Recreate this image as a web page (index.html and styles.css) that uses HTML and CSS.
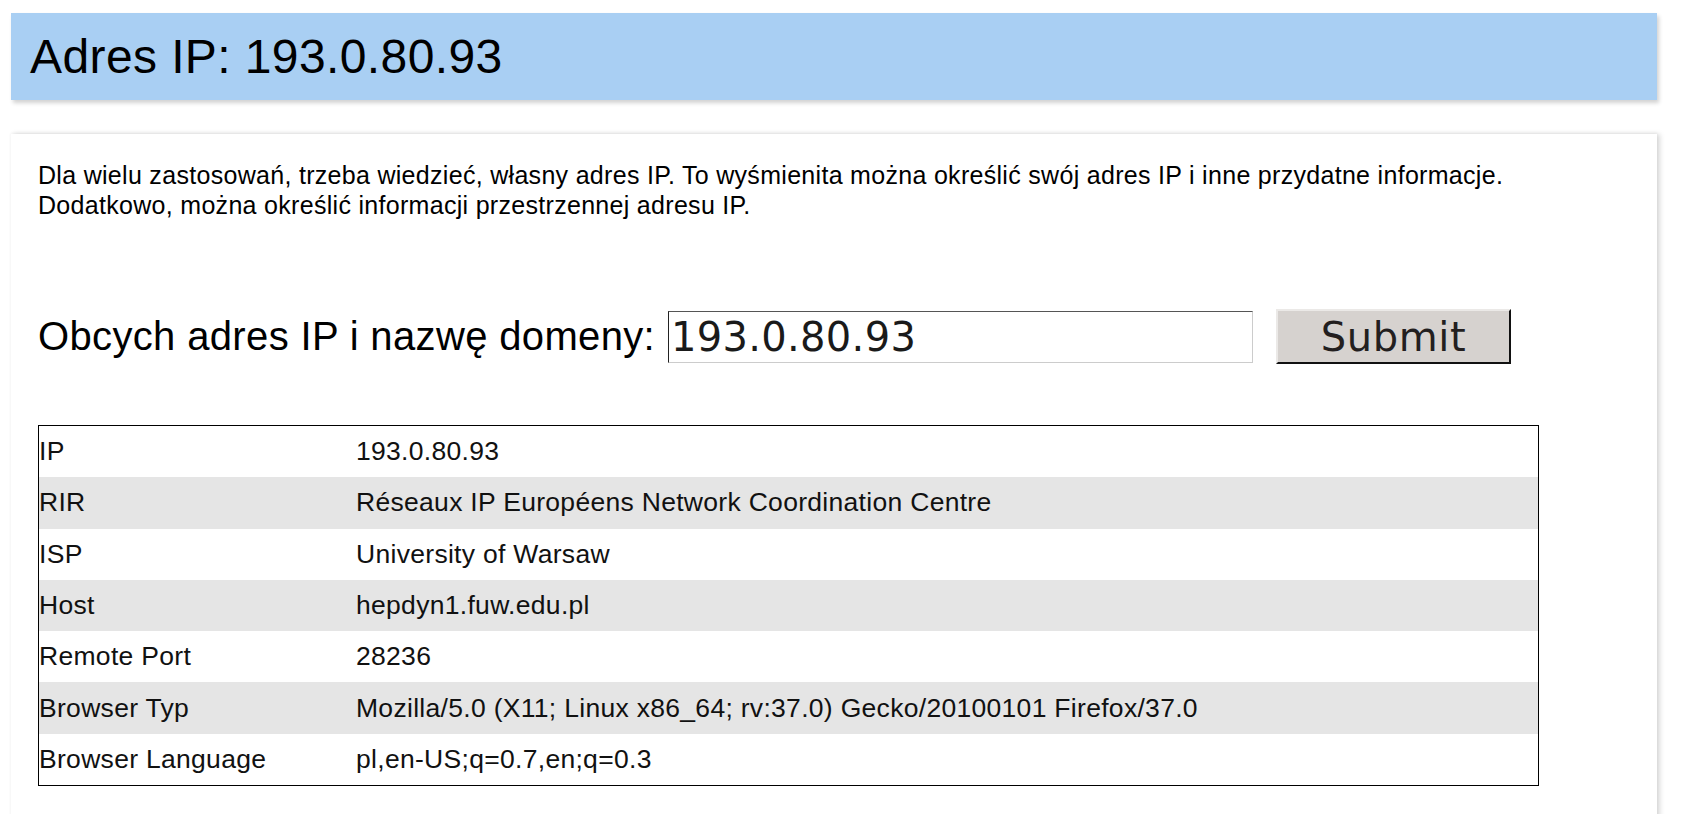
FILE: index.html
```html
<!DOCTYPE html>
<html lang="pl">
<head>
<meta charset="utf-8">
<title>Adres IP: 193.0.80.93</title>
<link rel="stylesheet" href="styles.css">
</head>
<body>
<header class="topbar">
  <h1 class="title">Adres IP: 193.0.80.93</h1>
</header>
<main class="card">
  <p class="intro">Dla wielu zastosowań, trzeba wiedzieć, własny adres IP. To wyśmienita można określić swój adres IP i inne przydatne informacje.<br>Dodatkowo, można określić informacji przestrzennej adresu IP.</p>
  <form class="lookup">
    <label class="lookup-label" for="ip">Obcych adres IP i nazwę domeny:</label>
    <input class="lookup-input" id="ip" type="text" value="193.0.80.93">
    <button class="lookup-btn" type="button">Submit</button>
  </form>
  <table class="info">
    <tr><td class="key">IP</td><td class="val">193.0.80.93</td></tr>
    <tr><td class="key">RIR</td><td class="val">Réseaux IP Européens Network Coordination Centre</td></tr>
    <tr><td class="key">ISP</td><td class="val">University of Warsaw</td></tr>
    <tr><td class="key">Host</td><td class="val">hepdyn1.fuw.edu.pl</td></tr>
    <tr><td class="key">Remote Port</td><td class="val">28236</td></tr>
    <tr><td class="key">Browser Typ</td><td class="val">Mozilla/5.0 (X11; Linux x86_64; rv:37.0) Gecko/20100101 Firefox/37.0</td></tr>
    <tr><td class="key">Browser Language</td><td class="val">pl,en-US;q=0.7,en;q=0.3</td></tr>
  </table>
</main>
</body>
</html>
```
FILE: styles.css
```css
html, body {
  margin: 0;
  padding: 0;
  background: #ffffff;
}
body {
  padding: 13px 33px 0 11px;
  font-family: "Liberation Sans", Arial, sans-serif;
  color: #000;
}
.topbar {
  background: #a9cff3;
  height: 87px;
  padding-left: 19px;
  box-shadow: 2px 3px 4px rgba(0,0,0,0.18);
}
.title {
  margin: 0;
  font-weight: normal;
  font-size: 48px;
  line-height: 87px;
  letter-spacing: 0.4px;
}
.card {
  margin-top: 34px;
  background: #fff;
  padding: 26px 27px 40px 27px;
  box-shadow: 3px 0 5px rgba(0,0,0,0.15), 0 -1px 3px rgba(0,0,0,0.05);
  min-height: 700px;
}
.intro {
  margin: 0;
  font-size: 25px;
  line-height: 30px;
  letter-spacing: 0.3px;
}
.lookup {
  display: flex;
  align-items: center;
  margin-top: 89px;
  height: 55px;
}
.lookup-label {
  font-size: 40px;
  letter-spacing: 0.35px;
  margin-right: 13px;
}
.lookup-input {
  width: 585px;
  height: 52px;
  box-sizing: border-box;
  padding: 0 2px;
  border: 1px solid;
  border-color: #555 #ccc #ccc #222;
  font-family: "DejaVu Sans", sans-serif;
  font-size: 40px;
  letter-spacing: 0.3px;
  color: #1a1a1a;
  background: #fff;
}
.lookup-btn {
  margin-left: 23px;
  width: 235px;
  height: 55px;
  box-sizing: border-box;
  background: #d6d2cf;
  border: 2px solid;
  border-color: #ebe9e7 #111 #111 #ebe9e7;
  font-family: "DejaVu Sans", sans-serif;
  font-size: 40px;
  letter-spacing: 0.6px;
  color: #231f1f;
  padding: 0;
}
.info {
  margin-top: 61px;
  width: 1501px;
  border: 1px solid #000;
  border-collapse: collapse;
  font-size: 26.5px;
  letter-spacing: 0.3px;
}
.info td {
  height: 51.3px;
  padding: 0;
  vertical-align: middle;
  color: #111;
}
.info .key {
  width: 317px;
}
.info tr:nth-child(even) td {
  background: #e5e5e5;
}
```
